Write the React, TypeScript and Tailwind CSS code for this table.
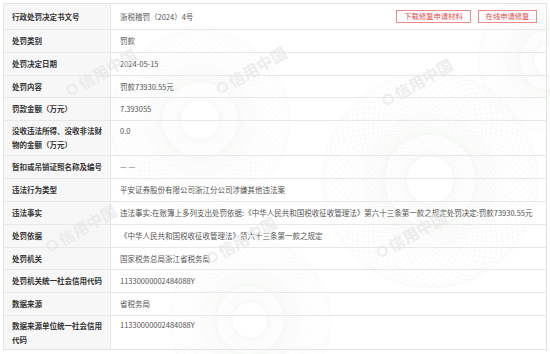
import React from 'react';

type Row = { label: string; value?: string; h: string; buttons?: boolean; top?: string };

const rows: Row[] = [
  { label: '行政处罚决定书文号', value: '浙税稽罚（2024）4号', h: 'h-[26px]', buttons: true },
  { label: '处罚类别', value: '罚款', h: 'h-[23px]' },
  { label: '处罚决定日期', value: '2024-05-15', h: 'h-[23px]' },
  { label: '处罚内容', value: '罚款73930.55元', h: 'h-[22px]' },
  { label: '罚款金额（万元）', value: '7.393055', h: 'h-[23px]' },
  { label: '没收违法所得、没收非法财物的金额（万元）', value: '0.0', h: 'h-[35px]', top: 'pt-[3px]' },
  { label: '暂扣或吊销证照名称及编号', value: '— —', h: 'h-[23px]' },
  { label: '违法行为类型', value: '平安证券股份有限公司浙江分公司涉嫌其他违法案', h: 'h-[23px]' },
  {
    label: '违法事实',
    value:
      '违法事实:在账簿上多列支出处罚依据:《中华人民共和国税收征收管理法》第六十三条第一款之规定处罚决定:罚款73930.55元',
    h: 'h-[23px]',
  },
  { label: '处罚依据', value: '《中华人民共和国税收征收管理法》第六十三条第一款之规定', h: 'h-[23px]' },
  { label: '处罚机关', value: '国家税务总局浙江省税务局', h: 'h-[22px]' },
  { label: '处罚机关统一社会信用代码', value: '11330000002484088Y', h: 'h-[23px]' },
  { label: '数据来源', value: '省税务局', h: 'h-[23px]' },
  { label: '数据来源单位统一社会信用代码', value: '11330000002484088Y', h: 'h-[33px]', top: 'pt-[2px]' },
];

// faint "信用中国" marks laid over the table
const marks = [
  'left-[62px] top-[64px]',
  'left-[212px] top-[62px]',
  'left-[378px] top-[74px]',
  'left-[42px] top-[220px]',
  'left-[202px] top-[232px]',
  'left-[372px] top-[226px]',
];

function Rosette({ className }: { className: string }) {
  return (
    <svg className={className} viewBox="-100 -100 200 200" fill="none" stroke="#9fbf9a" strokeWidth="0.4">
      {Array.from({ length: 36 }).map((_, i) => (
        <ellipse key={i} cx="0" cy="0" rx="90" ry="38" transform={`rotate(${i * 5})`} />
      ))}
      {Array.from({ length: 24 }).map((_, i) => (
        <ellipse key={'b' + i} cx="0" cy="0" rx="55" ry="20" transform={`rotate(${i * 7.5})`} />
      ))}
    </svg>
  );
}

export default function App() {
  return (
    <div
      className="relative w-[550px] h-[354px] bg-white p-[3px] overflow-hidden text-[7.5px] leading-[14px]"
      style={{ fontFamily: '"Noto Sans CJK SC", "Noto Sans", sans-serif' }}
    >
      {/* background pattern */}
      <div className="pointer-events-none absolute inset-0 opacity-[0.1]">
        <Rosette className="absolute left-[100px] top-[20px] w-[200px] h-[200px]" />
        <Rosette className="absolute left-[310px] top-[60px] w-[240px] h-[240px]" />
        <Rosette className="absolute left-[470px] top-[-20px] w-[160px] h-[160px]" />
        <Rosette className="absolute left-[160px] top-[230px] w-[180px] h-[180px]" />
      </div>

      <div className="relative border border-[#e4e4e4]">
        {rows.map((r, i) => (
          <div
            key={i}
            className={`flex ${r.h} ${i < rows.length - 1 ? 'border-b border-[#e8e8e8]' : ''}`}
          >
            <div className="w-[107px] shrink-0 flex items-center pl-[8px] pr-[2px] bg-[#f6f6f6]/90 border-r border-[#e8e8e8] font-bold text-[#333]">
              <span className="block">{r.label}</span>
            </div>
            <div
              className={`flex-1 flex justify-between pl-[9px] pr-[9px] text-[#555] whitespace-nowrap ${
                r.top ? `items-start ${r.top}` : 'items-center'
              }`}
            >
              <span>{r.value}</span>
              {r.buttons && (
                <div className="flex gap-[7px]">
                  <span className="h-[13px] w-[75px] flex items-center justify-center border border-[#ef8a8a] text-[#e34b4b] text-[7.3px] leading-none">
                    下载修复申请材料
                  </span>
                  <span className="h-[13px] w-[59px] flex items-center justify-center border border-[#ef8a8a] text-[#e34b4b] text-[7.3px] leading-none">
                    在线申请修复
                  </span>
                </div>
              )}
            </div>
          </div>
        ))}
      </div>

      {marks.map((m, i) => (
        <div
          key={i}
          className={`pointer-events-none absolute ${m} flex items-center gap-[3px] -rotate-[30deg] text-[#e6e6e6]/70 text-[16px] leading-none font-bold`}
        >
          <span className="w-[11px] h-[11px] rounded-full border-[2px] border-[#e6e6e6]/70" />
          <span>信用中国</span>
        </div>
      ))}
    </div>
  );
}
